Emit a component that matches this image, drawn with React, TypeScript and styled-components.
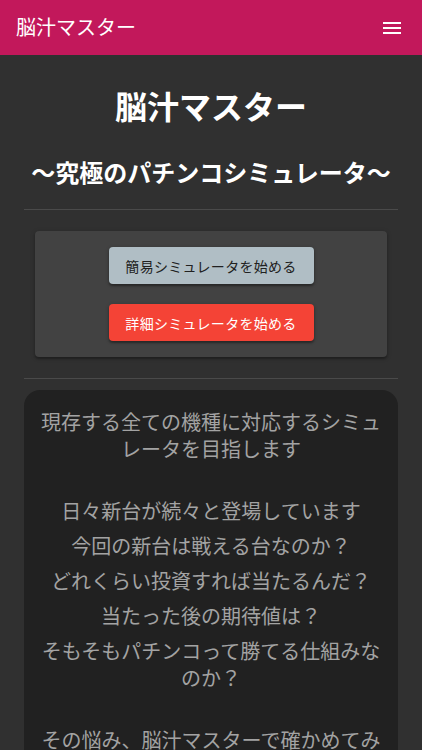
import React from "react";
import styled, { createGlobalStyle } from "styled-components";

const Global = createGlobalStyle`
  html, body { margin: 0; padding: 0; background: #303030; }
  body { font-family: "Noto Sans CJK JP", "Noto Sans", sans-serif; }
  * { box-sizing: border-box; }
`;

const Header = styled.header`
  height: 55px;
  background: #c2185b;
  display: flex;
  align-items: center;
  justify-content: space-between;
  padding: 0 24px 0 16px;
`;

const Brand = styled.div`
  color: #fff;
  font-size: 20px;
  line-height: 24px;
  margin-top: -2px;
`;

const MenuButton = styled.button`
  background: none;
  border: 0;
  padding: 0;
  width: 24px;
  height: 24px;
  display: flex;
  align-items: center;
  justify-content: center;
  margin-right: -6px;
`;

const Main = styled.main`
  padding: 0 24px 40px;
`;

const Title = styled.h1`
  margin: 31px 0 0;
  text-align: center;
  color: #fff;
  font-size: 32px;
  line-height: 38px;
  font-weight: 700;
`;

const Subtitle = styled.h2`
  margin: 33px 0 0;
  text-align: center;
  color: #fff;
  font-size: 24px;
  line-height: 29px;
  font-weight: 700;
  white-space: nowrap;
  margin-left: -10px;
  margin-right: -10px;
`;

const Divider = styled.hr<{ $top: number }>`
  border: 0;
  border-top: 1px solid #4a4a4a;
  margin: ${(p) => p.$top}px 0 0;
`;

const ActionCard = styled.section`
  margin: 21px 11px 0;
  background: #424242;
  border-radius: 4px;
  box-shadow: 0 2px 2px rgba(0, 0, 0, 0.25), 0 1px 5px rgba(0, 0, 0, 0.2);
  padding: 16px 0;
  display: flex;
  flex-direction: column;
  align-items: center;
  gap: 20px;
`;

const Button = styled.button<{ $variant: "plain" | "warn" }>`
  width: 205px;
  height: 37px;
  border: 0;
  border-radius: 4px;
  font-family: "Noto Sans CJK JP", "Noto Sans", sans-serif;
  font-size: 14px;
  letter-spacing: 0.3px;
  background: ${(p) => (p.$variant === "warn" ? "#f44336" : "#b0bec5")};
  color: ${(p) => (p.$variant === "warn" ? "#fff" : "#212121")};
  box-shadow: 0 2px 2px rgba(0, 0, 0, 0.3), 0 1px 4px rgba(0, 0, 0, 0.2);
`;

const TextCard = styled.section`
  margin-top: 11px;
  background: #212121;
  border-radius: 16px;
  padding: 18px 15px 20px;
  text-align: center;
  color: #a3a3a3;
  font-size: 20px;
  line-height: 27px;
`;

const Para = styled.p`
  margin: 0 0 8px;
`;

const Blank = styled.div`
  height: 19px;
  margin-bottom: 8px;
`;

const lines = [
  "現存する全ての機種に対応するシミュレータを目指します",
  "",
  "日々新台が続々と登場しています",
  "今回の新台は戦える台なのか？",
  "どれくらい投資すれば当たるんだ？",
  "当たった後の期待値は？",
  "そもそもパチンコって勝てる仕組みなのか？",
  "",
  "その悩み、脳汁マスターで確かめてみませんか？",
];

export default function App() {
  return (
    <>
      <Global />
      <Header>
        <Brand>脳汁マスター</Brand>
        <MenuButton aria-label="menu">
          <svg width="24" height="24" viewBox="0 0 24 24">
            <path d="M3 6h18v2H3zM3 11h18v2H3zM3 16h18v2H3z" fill="#fff" />
          </svg>
        </MenuButton>
      </Header>
      <Main>
        <Title>脳汁マスター</Title>
        <Subtitle>〜究極のパチンコシミュレータ〜</Subtitle>
        <Divider $top={23} />
        <ActionCard>
          <Button $variant="plain">簡易シミュレータを始める</Button>
          <Button $variant="warn">詳細シミュレータを始める</Button>
        </ActionCard>
        <Divider $top={21} />
        <TextCard>
          {lines.map((l, i) =>
            l ? <Para key={i}>{l}</Para> : <Blank key={i} />
          )}
        </TextCard>
      </Main>
    </>
  );
}
